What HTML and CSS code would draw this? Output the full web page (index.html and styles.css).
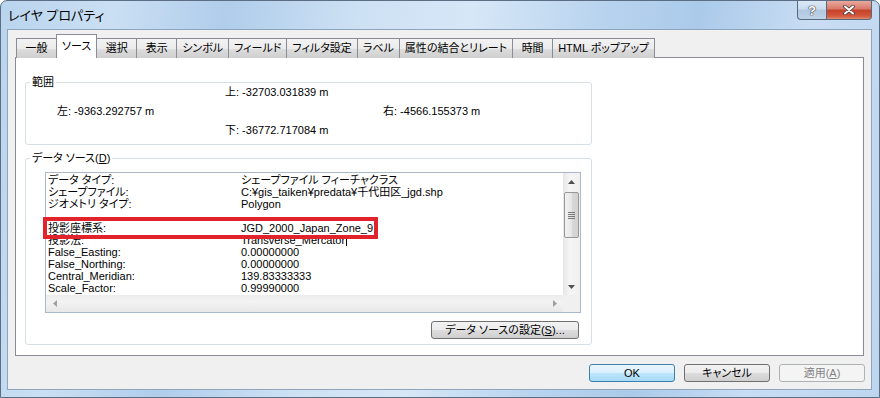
FILE: index.html
```html
<!DOCTYPE html>
<html>
<head>
  <title>レイヤ プロパティ</title>
  <link rel="stylesheet" href="styles.css">
</head>
<body>
  <div class="window">
    <div class="titlebar">
      <span class="title">レイヤ プロパティ</span>
      <div class="caption-buttons">
        <div class="cap help">?</div>
        <div class="cap close">
          <svg width="12" height="10" viewBox="0 0 12 10">
            <path d="M2 1.5 L10 8.5 M10 1.5 L2 8.5" stroke="#4a3a38" stroke-width="3.6" stroke-linecap="round"/>
            <path d="M2 1.5 L10 8.5 M10 1.5 L2 8.5" stroke="#fff" stroke-width="2" stroke-linecap="round"/>
          </svg>
        </div>
      </div>
    </div>

    <div class="client">
      <div class="tabs">
        <div class="tab">一般</div>
        <div class="tab active">ソース</div>
        <div class="tab">選択</div>
        <div class="tab">表示</div>
        <div class="tab">シンボル</div>
        <div class="tab">フィールド</div>
        <div class="tab">フィルタ設定</div>
        <div class="tab">ラベル</div>
        <div class="tab">属性の結合とリレート</div>
        <div class="tab">時間</div>
        <div class="tab">HTML ポップアップ</div>
      </div>

      <div class="panel">
        <fieldset class="group extent">
          <legend>範囲</legend>
          <div class="extent-grid">
            <span class="top">上: -32703.031839 m</span>
            <span class="left">左: -9363.292757 m</span>
            <span class="right">右: -4566.155373 m</span>
            <span class="bottom">下: -36772.717084 m</span>
          </div>
        </fieldset>

        <fieldset class="group source">
          <legend>データ ソース(<u>D</u>)</legend>
          <div class="source-body">
            <div class="listbox">
              <div class="rows">
                <div class="row"><span>データ タイプ:</span><span>シェープファイル フィーチャクラス</span></div>
                <div class="row"><span>シェープファイル:</span><span>C:¥gis_taiken¥predata¥千代田区_jgd.shp</span></div>
                <div class="row"><span>ジオメトリ タイプ:</span><span>Polygon</span></div>
                <div class="row"><span></span><span></span></div>
                <div class="row"><span>投影座標系:</span><span>JGD_2000_Japan_Zone_9</span></div>
                <div class="row"><span>投影法:</span><span>Transverse_Mercator<i class="caret"></i></span></div>
                <div class="row"><span>False_Easting:</span><span>0.00000000</span></div>
                <div class="row"><span>False_Northing:</span><span>0.00000000</span></div>
                <div class="row"><span>Central_Meridian:</span><span>139.83333333</span></div>
                <div class="row"><span>Scale_Factor:</span><span>0.99990000</span></div>
              </div>
              <div class="vscroll">
                <div class="arrow">
                  <svg width="7" height="4" viewBox="0 0 7 4"><polygon points="0,4 3.5,0 7,4" fill="#505050"/></svg>
                </div>
                <div class="track">
                  <div class="thumb">
                    <svg width="7" height="7" viewBox="0 0 7 7">
                      <path d="M0 0.5 H7 M0 2.5 H7 M0 4.5 H7 M0 6.5 H7" stroke="#7a7a7a" stroke-width="1"/>
                    </svg>
                  </div>
                </div>
                <div class="arrow">
                  <svg width="7" height="4" viewBox="0 0 7 4"><polygon points="0,0 3.5,4 7,0" fill="#505050"/></svg>
                </div>
              </div>
              <div class="hscroll">
                <div class="arrow">
                  <svg width="4" height="7" viewBox="0 0 4 7"><polygon points="4,0 0,3.5 4,7" fill="#a0a0a0"/></svg>
                </div>
                <div class="htrack"></div>
                <div class="arrow">
                  <svg width="4" height="7" viewBox="0 0 4 7"><polygon points="0,0 4,3.5 0,7" fill="#a0a0a0"/></svg>
                </div>
              </div>
              <div class="corner"></div>
              <div class="highlight"></div>
            </div>
            <div class="source-actions">
              <button class="btn wide">データ ソースの設定(<u>S</u>)...</button>
            </div>
          </div>
        </fieldset>
      </div>

      <div class="dialog-buttons">
        <button class="btn default">OK</button>
        <button class="btn">キャンセル</button>
        <button class="btn disabled">適用(<u>A</u>)</button>
      </div>
    </div>
  </div>
</body>
</html>
```

FILE: styles.css
```css
body {
  margin: 0;
  width: 880px;
  height: 398px;
  overflow: hidden;
  font-family: "Liberation Sans", "Noto Sans CJK JP", sans-serif;
  font-size: 11px;
  font-feature-settings: "palt";
  color: #000;
  background: #fff;
}
.window {
  box-sizing: border-box;
  height: 398px;
  display: flex;
  flex-direction: column;
  padding: 0 7px 7px 6px;
  border: 1px solid #5b6e84;
  border-radius: 7px 7px 0 0;
  background: linear-gradient(100deg, #b9d4ee 0%, #cadff3 12%, #b0cdeb 24%, #cde1f4 38%, #d6e7f7 50%, #b8d3ee 64%, #abcaea 74%, #c8ddf3 86%, #bdd6ef 100%);
}
.titlebar {
  height: 28px;
  display: flex;
  align-items: flex-start;
}
.title {
  padding: 6px 0 0 1px;
  font-size: 13px;
  line-height: 17px;
}
.caption-buttons {
  margin-left: auto;
  display: flex;
}
.cap {
  box-sizing: border-box;
  height: 19px;
  border: 1px solid #58697f;
  border-top: none;
  display: flex;
  align-items: center;
  justify-content: center;
}
.help {
  width: 29px;
  border-right: none;
  border-radius: 0 0 0 4px;
  background: linear-gradient(#dbe8f5 0%, #c9dbee 45%, #b1c8e0 50%, #bfd3e8 100%);
  color: #fff;
  font-size: 13px;
  font-weight: bold;
  text-shadow: 0 0 1px #333, 0 0 1px #333, 0 0 1px #333;
}
.close {
  width: 46px;
  border-radius: 0 0 4px 0;
  background: linear-gradient(#e8a99d 0%, #d8786a 45%, #c54027 50%, #d45a3f 85%, #e28d6e 100%);
}
.client {
  flex: 1;
  display: flex;
  flex-direction: column;
  background: #f0f0f0;
  border: 1px solid #8fa5bc;
  padding: 5px 7px 7px 7px;
}

/* tabs */
.tabs {
  display: flex;
  align-items: flex-end;
  height: 23px;
  margin-bottom: -1px;
  padding-left: 1px;
  position: relative;
  z-index: 1;
}
.tab {
  box-sizing: border-box;
  height: 20px;
  min-width: 41px;
  padding: 0 5px;
  margin-right: -1px;
  border: 1px solid #898c95;
  border-bottom: none;
  background: linear-gradient(#f3f3f3 0%, #ebebeb 50%, #dddddd 51%, #cfcfcf 100%);
  text-align: center;
  line-height: 19px;
  font-size: 11px;
  white-space: nowrap;
}
.tab.active {
  height: 24px;
  background: #fff;
  line-height: 22px;
  position: relative;
  z-index: 2;
}
.panel {
  flex: 1;
  background: #fff;
  border: 1px solid #898c95;
  padding: 18px 0 0 9px;
}

/* group boxes */
.group {
  box-sizing: border-box;
  width: 567px;
  margin: 0;
  padding: 0;
  border: 1px solid #d5dfe5;
  border-radius: 3px;
}
.group legend {
  padding: 0 2px;
  margin-left: 4px;
  line-height: 12px;
  font-size: 11px;
}
.extent-grid {
  margin-top: -3px;
  padding: 0 8px 7px 31px;
  display: grid;
  grid-template-columns: 168px 158px auto;
  grid-template-rows: 14px 14px 14px;
  row-gap: 5px;
  line-height: 14px;
}
.extent-grid .top { grid-column: 2; grid-row: 1; }
.extent-grid .left { grid-column: 1; grid-row: 2; }
.extent-grid .right { grid-column: 3; grid-row: 2; }
.extent-grid .bottom { grid-column: 2; grid-row: 3; }
.source {
  margin-top: 7px;
}
.source-body {
  padding: 8px 10px 5px 19px;
}

/* list box */
.listbox {
  position: relative;
  box-sizing: border-box;
  height: 141px;
  border: 1px solid #a9b9ca;
  display: grid;
  grid-template-columns: 1fr 17px;
  grid-template-rows: 1fr 17px;
}
.rows {
  padding: 1px 0 0 2px;
  overflow: hidden;
}
.row {
  display: grid;
  grid-template-columns: 193px auto;
  height: 12px;
  line-height: 12px;
  white-space: nowrap;
}
.caret {
  display: inline-block;
  width: 0;
  height: 11px;
  border-right: 1px solid #000;
  margin-left: 1px;
  vertical-align: -2px;
}
.vscroll {
  display: flex;
  flex-direction: column;
  background: linear-gradient(90deg, #e6e6e6, #f5f5f5 40%, #f0f0f0);
}
.arrow {
  flex: 0 0 17px;
  height: 17px;
  display: flex;
  align-items: center;
  justify-content: center;
}
.track {
  flex: 1;
  padding: 2px 1px 0 1px;
}
.thumb {
  height: 46px;
  box-sizing: border-box;
  border: 1px solid #979797;
  border-radius: 2px;
  background: linear-gradient(90deg, #f2f2f2, #e6e6e6 50%, #d8d8d8 51%, #d2d2d2);
  display: flex;
  align-items: center;
  justify-content: center;
}
.hscroll {
  display: flex;
  background: linear-gradient(#ececec, #f3f3f3 40%, #e8e8e8);
}
.htrack {
  flex: 1;
}
.corner {
  background: #f0f0f0;
}
.highlight {
  position: absolute;
  left: -3px;
  top: 44px;
  width: 335px;
  height: 22px;
  box-sizing: border-box;
  border: 4px solid #e3232c;
}
.source-actions {
  display: flex;
  justify-content: flex-end;
  margin-top: 8px;
  padding-right: 2px;
}

/* buttons */
.btn {
  box-sizing: border-box;
  width: 86px;
  height: 18px;
  padding: 0;
  font-family: inherit;
  font-size: 11px;
  font-feature-settings: "palt";
  line-height: 16px;
  color: #000;
  border: 1px solid #707070;
  border-radius: 3px;
  background: linear-gradient(#f2f2f2 0%, #ebebeb 50%, #dddddd 51%, #cfcfcf 100%);
}
.btn.wide {
  width: 148px;
}
.btn.default {
  border-color: #3c7fb1;
  background: linear-gradient(#eaf6fd 0%, #d9f0fc 50%, #bee6fd 51%, #a7d9f5 100%);
}
.btn.disabled {
  border-color: #adb2b5;
  background: #f4f4f4;
  color: #838383;
}
.dialog-buttons {
  display: flex;
  justify-content: flex-end;
  gap: 9px;
  margin-top: 8px;
  margin-right: -1px;
}
```
